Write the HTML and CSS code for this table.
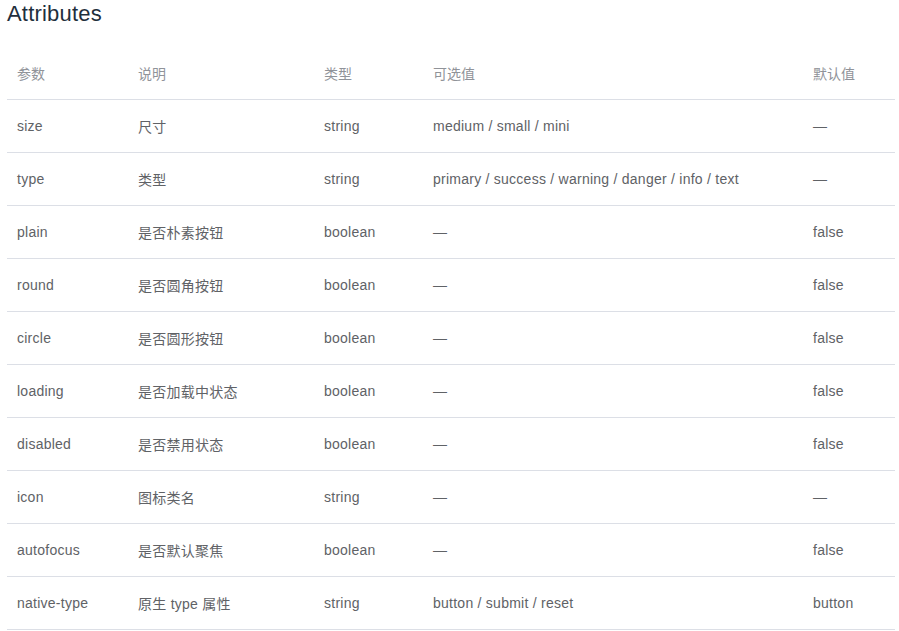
FILE: index.html
```html
<!DOCTYPE html>
<html>
<head>
<meta charset="utf-8">
<link rel="stylesheet" href="styles.css">
</head>
<body>
<div class="page">
<h3 class="title">Attributes</h3>
<table class="attrs">
<colgroup>
<col class="c1"><col class="c2"><col class="c3"><col class="c4"><col class="c5">
</colgroup>
<thead>
<tr><th>参数</th><th>说明</th><th>类型</th><th>可选值</th><th>默认值</th></tr>
</thead>
<tbody>
<tr><td>size</td><td>尺寸</td><td>string</td><td>medium / small / mini</td><td>—</td></tr>
<tr><td>type</td><td>类型</td><td>string</td><td>primary / success / warning / danger / info / text</td><td>—</td></tr>
<tr><td>plain</td><td>是否朴素按钮</td><td>boolean</td><td>—</td><td>false</td></tr>
<tr><td>round</td><td>是否圆角按钮</td><td>boolean</td><td>—</td><td>false</td></tr>
<tr><td>circle</td><td>是否圆形按钮</td><td>boolean</td><td>—</td><td>false</td></tr>
<tr><td>loading</td><td>是否加载中状态</td><td>boolean</td><td>—</td><td>false</td></tr>
<tr><td>disabled</td><td>是否禁用状态</td><td>boolean</td><td>—</td><td>false</td></tr>
<tr><td>icon</td><td>图标类名</td><td>string</td><td>—</td><td>—</td></tr>
<tr><td>autofocus</td><td>是否默认聚焦</td><td>boolean</td><td>—</td><td>false</td></tr>
<tr><td>native-type</td><td>原生 type 属性</td><td>string</td><td>button / submit / reset</td><td>button</td></tr>
</tbody>
</table>
</div>
</body>
</html>
```

FILE: styles.css
```css
html, body {
  margin: 0;
  padding: 0;
  background: #ffffff;
}
.page {
  padding: 0 4px 0 7px;
  font-family: "Liberation Sans", "Noto Sans CJK SC", sans-serif;
}
.title {
  margin: 0;
  height: 28px;
  line-height: 28px;
  font-size: 22px;
  font-weight: 400;
  color: #1f2f3d;
  letter-spacing: 0.2px;
}
.attrs {
  margin-top: 19px;
  width: 888px;
  border-collapse: collapse;
  table-layout: fixed;
  font-size: 14px;
}
.c1 { width: 121px; }
.c2 { width: 186px; }
.c3 { width: 109px; }
.c4 { width: 380px; }
.c5 { width: 92px; }
.attrs th {
  text-align: left;
  font-weight: 400;
  color: #909399;
  height: 52px;
  padding: 0 0 0 10px;
  border-bottom: 1px solid #dcdfe6;
  white-space: nowrap;
}
.attrs td {
  height: 52px;
  padding: 0 0 0 10px;
  color: #606266;
  border-bottom: 1px solid #dcdfe6;
  white-space: nowrap;
  letter-spacing: 0.25px;
}
```
